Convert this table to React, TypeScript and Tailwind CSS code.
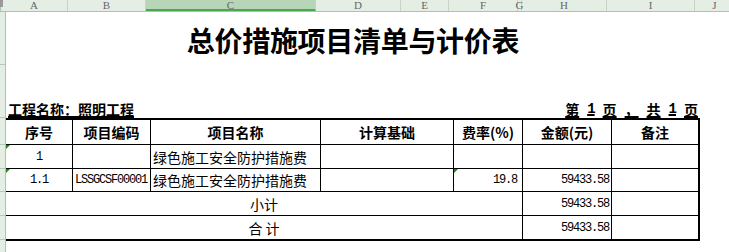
import React from 'react';

const cols = [
  { label: 'A', w: 'w-[67px]' },
  { label: 'B', w: 'w-[78px]' },
  { label: 'C', w: 'w-[170px]', active: true },
  { label: 'D', w: 'w-[85px]' },
  { label: 'E', w: 'w-[48px]' },
  { label: 'F', w: 'w-[69px]' },
  { label: 'G', w: 'w-[4px]', narrow: true },
  { label: 'H', w: 'w-[85px]' },
  { label: 'I', w: 'w-[88px]' },
  { label: 'J', w: 'w-[40px]' },
];

// heights of the visible sheet rows, matched on the left strip
const rowHeights = ['h-[53px]', 'h-[53px]', 'h-[27px]', 'h-[24px]', 'h-[23px]', 'h-[24px]', 'h-[24px]', 'h-[20px]'];

const mono = "font-['Liberation_Mono',monospace] text-[12px] tracking-[-1.2px]";

function Mark() {
  return <span className="absolute left-0 top-0 w-0 h-0 border-t-[4px] border-r-[4px] border-t-[#1d8a1d] border-r-transparent" />;
}

function Cell({
  children,
  className = '',
  last = false,
  mark = false,
}: {
  children?: React.ReactNode;
  className?: string;
  last?: boolean;
  mark?: boolean;
}) {
  return (
    <div
      className={`relative flex items-center border-b border-black ${last ? 'border-r-2' : 'border-r'} ${className}`}
    >
      {mark && <Mark />}
      {children}
    </div>
  );
}

export default function App() {
  return (
    <div className="w-[729px] h-[252px] overflow-hidden bg-white text-black font-['Noto_Sans_CJK_SC',sans-serif]">
      {/* column header bar */}
      <div className="flex h-[12px] bg-[#e4eee4] border-b border-[#a9c6a9]">
        <div className="w-[6px] border-r border-[#a9c6a9] relative">
          <span className="absolute left-0 top-0 w-[3px] h-[7px] bg-[#9a9a9a]" />
        </div>
        {cols.map((c) => (
          <div
            key={c.label}
            className={`${c.w} shrink-0 flex items-start justify-center border-r border-[#c3d6c3] font-['Liberation_Serif',serif] text-[11px] leading-[10px] text-[#666] ${
              c.narrow ? 'overflow-visible' : 'overflow-hidden'
            } ${c.active ? 'bg-[#b7d6b7] border-b-2 border-b-[#4aa84a]' : ''}`}
          >
            {c.label}
          </div>
        ))}
      </div>

      <div className="flex">
        {/* row header strip */}
        <div className="w-[6px] shrink-0 bg-[#e4eee4] border-r border-[#a9c6a9] flex flex-col">
          {rowHeights.map((h, i) => (
            <div key={i} className={`${h} border-b border-[#b3cdb3]`} />
          ))}
        </div>

        <div className="flex flex-col">
          <div className="h-[53px] w-[694px] flex items-center justify-center pt-[3px]">
            <h1 className="text-[28px] font-bold leading-none tracking-[-0.3px]">总价措施项目清单与计价表</h1>
          </div>

          <div className="h-[53px] w-[694px] flex items-end justify-between pb-[1px] text-[14px] font-bold leading-[16px]">
            <span className="pl-[2px] underline decoration-2 underline-offset-[1px]">工程名称：照明工程</span>
            <span className="pr-[2px] flex gap-[8px] underline decoration-2 underline-offset-[1px]">
              <span>第</span>
              <span className="font-['Liberation_Mono',monospace] tracking-[-1px]">1</span>
              <span>页</span>
              <span>，</span>
              <span>共</span>
              <span className="font-['Liberation_Mono',monospace] tracking-[-1px]">1</span>
              <span>页</span>
            </span>
          </div>

          <div className="w-[694px] grid grid-cols-[67px_78px_170px_133px_69px_89px_88px] border-t-2 border-black text-[14px] leading-none">
            {/* header row */}
            {['序号', '项目编码', '项目名称', '计算基础'].map((t) => (
              <Cell key={t} className="h-[25px] justify-center font-bold">{t}</Cell>
            ))}
            <Cell className="h-[25px] justify-center font-bold">费率(%)</Cell>
            <Cell className="h-[25px] justify-center font-bold">金额(元)</Cell>
            <Cell className="h-[25px] justify-center font-bold" last>备注</Cell>

            {/* row 1 */}
            <Cell className={`h-[24px] justify-center ${mono}`} mark>1</Cell>
            <Cell className="h-[24px]" />
            <Cell className="h-[24px] pl-[2px]">绿色施工安全防护措施费</Cell>
            <Cell className="h-[24px]" />
            <Cell className="h-[24px]" />
            <Cell className="h-[24px]" />
            <Cell className="h-[24px]" last />

            {/* row 1.1 */}
            <Cell className={`h-[23px] justify-center ${mono}`} mark>1.1</Cell>
            <Cell className={`h-[23px] pl-[2px] ${mono}`}>LSSGCSF00001</Cell>
            <Cell className="h-[23px] pl-[2px]">绿色施工安全防护措施费</Cell>
            <Cell className="h-[23px]" />
            <Cell className={`h-[23px] justify-end pr-[5px] ${mono}`} mark>19.8</Cell>
            <Cell className={`h-[23px] justify-end pr-[2px] ${mono}`}>59433.58</Cell>
            <Cell className="h-[23px]" last />

            {/* subtotal */}
            <Cell className="h-[24px] col-span-5 justify-center">小计</Cell>
            <Cell className={`h-[24px] justify-end pr-[2px] ${mono}`}>59433.58</Cell>
            <Cell className="h-[24px]" last />

            {/* total */}
            <Cell className="h-[25px] col-span-5 justify-center border-b-2 whitespace-pre">合 计</Cell>
            <Cell className={`h-[25px] justify-end pr-[2px] border-b-2 ${mono}`}>59433.58</Cell>
            <Cell className="h-[25px] border-b-2" last />
          </div>
        </div>
      </div>
    </div>
  );
}
